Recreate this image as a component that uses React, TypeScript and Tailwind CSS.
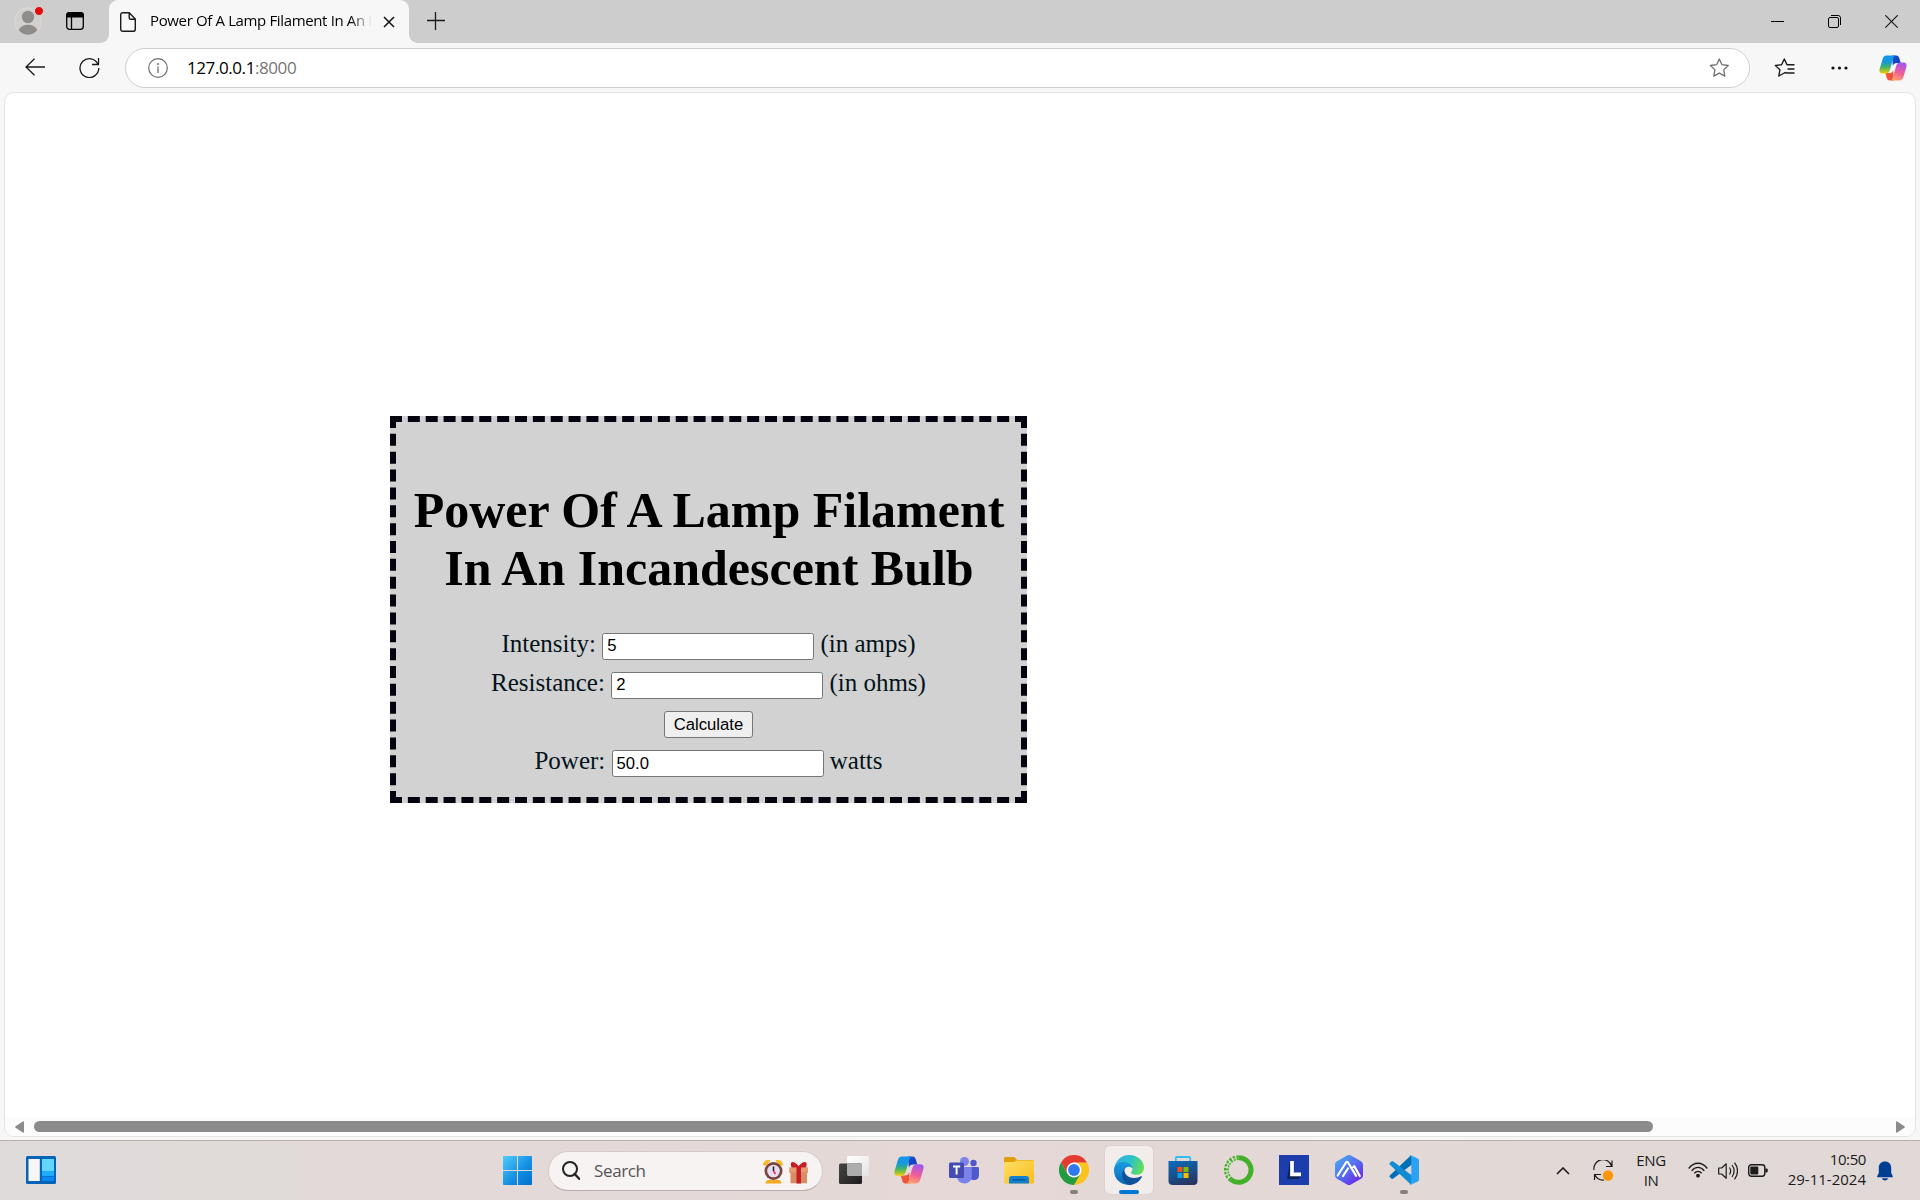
import type { ReactNode } from 'react';

type IconProps = { className?: string; box: string; children: ReactNode };

function Icon({ className = '', box, children }: IconProps) {
  return (
    <svg viewBox={box} fill="none" className={`block shrink-0 ${className}`}>
      {children}
    </svg>
  );
}

function CopilotIcon({ className, id }: { className: string; id: string }) {
  return (
    <Icon box="0 0 30 28" className={className}>
      <defs>
        <linearGradient id={`${id}a`} x1="0" y1="0" x2="0" y2="1">
          <stop offset="0" stopColor="#1593ee" />
          <stop offset=".38" stopColor="#1698d8" />
          <stop offset=".65" stopColor="#3fb566" />
          <stop offset="1" stopColor="#f2cf05" />
        </linearGradient>
        <linearGradient id={`${id}b`} x1=".6" y1="0" x2=".3" y2="1">
          <stop offset="0" stopColor="#a557f0" />
          <stop offset=".5" stopColor="#ee5b9a" />
          <stop offset="1" stopColor="#ffa56b" />
        </linearGradient>
        <linearGradient id={`${id}c`} x1="0" y1="0" x2="1" y2="1">
          <stop offset="0" stopColor="#1b4fd0" />
          <stop offset="1" stopColor="#0c3cc0" />
        </linearGradient>
        <linearGradient id={`${id}d`} x1="0" y1="0" x2="1" y2="1">
          <stop offset="0" stopColor="#f0612d" />
          <stop offset="1" stopColor="#ee4a3f" />
        </linearGradient>
      </defs>
      <path d="M14 .5h4.500c1.800 0 2.700 1 3.200 2.700l1.600 5.300h-4c-2.500 0-3.800 1-4.500 3.200z" fill={`url(#${id}c)`} />
      <path d="M16 27.500h-4.500c-1.800 0-2.700-1-3.200-2.700L6.700 19.500h4c2.500 0 3.800-1 4.500-3.200z" fill={`url(#${id}d)`} />
      <path d="M8 .5h10.500c-2 0-2.800 1.500-3.300 3.300l-3.500 12c-.8 2.700-2 4-4.700 4H3.500C1 19.800-.2 18 .6 15L3.800 4.200C4.500 1.800 5.700.5 8 .5z" fill={`url(#${id}a)`} />
      <path d="M22 27.500H11.500c2 0 2.800-1.500 3.300-3.300l3.500-12c.8-2.700 2-4 4.700-4h3.500c2.500 0 3.700 1.800 2.900 4.800l-3.200 10.800c-.7 2.400-1.900 3.700-4.200 3.700z" fill={`url(#${id}b)`} />
    </Icon>
  );
}

function TabStrip() {
  return (
    <div className="flex h-[43px] shrink-0 items-start bg-[#cdcdcd]">
      <Icon box="0 0 32 32" className="ml-[14px] mt-[5px] h-8 w-8">
        <circle cx="14" cy="16.300" r="13.500" fill="#d2d0ce" stroke="#dedcda" />
        <circle cx="14" cy="12" r="6.200" fill="#8f8c89" />
        <path d="M4.500 25c2-3.500 5.500-5.200 9.500-5.200s7.500 1.700 9.500 5.200c-2.300 3-5.700 4.700-9.500 4.700S6.800 28 4.500 25z" fill="#8f8c89" />
        <circle cx="25" cy="6" r="4.500" fill="#e5080c" stroke="#d8d8d8" />
      </Icon>
      <Icon box="0 0 18 18" className="ml-5 mt-3 h-[18px] w-[18px]">
        <rect x=".7" y=".7" width="16.600" height="16.600" rx="2.800" stroke="#000" strokeWidth="1.300" />
        <path d="M0 5.500V3.500C0 1.500 1.500 0 3.500 0h11c2 0 3.500 1.500 3.500 3.500v2z" fill="#000" />
        <path d="M5.500 5v12.500" stroke="#000" strokeWidth="1.300" />
      </Icon>
      <Icon box="0 0 9 9" className="ml-4 mt-[34px] h-[9px] w-[9px]">
        <path d="M9 0v9H0c5 0 9-4 9-9z" fill="#f7f7f7" />
      </Icon>
      <div className="flex h-[43px] w-[300px] items-center rounded-t-[9px] bg-[#f7f7f7] pl-[11px]">
        <Icon box="0 0 16 20" className="h-5 w-4">
          <path d="M2.800.7h6.400L15.300 7v10.200c0 1.200-.9 2.100-2.100 2.100H2.800c-1.200 0-2.100-.9-2.100-2.100V2.800C.7 1.600 1.600.7 2.800.7zM9.200 1v4.700c0 .9.600 1.500 1.500 1.500h4.500" stroke="#1a1a1a" strokeWidth="1.400" />
        </Icon>
        <div className="mb-[3px] ml-[14px] w-[222px] overflow-hidden whitespace-nowrap bg-gradient-to-r from-black from-90% to-transparent bg-clip-text font-['Open_Sans'] text-[15px] leading-5 tracking-[-0.36px] text-transparent">
          Power Of A Lamp Filament In An I
        </div>
        <Icon box="0 0 12 12" className="ml-[11px] h-3 w-3">
          <path d="M1 1l10 10M11 1L1 11" stroke="#111" strokeWidth="1.500" />
        </Icon>
      </div>
      <Icon box="0 0 9 9" className="mt-[34px] h-[9px] w-[9px]">
        <path d="M0 0v9h9C4 9 0 5 0 0z" fill="#f7f7f7" />
      </Icon>
      <Icon box="0 0 18 18" className="ml-[9px] mt-3 h-[18px] w-[18px]">
        <path d="M8.500 0v18M0 8.500h18" stroke="#1a1a1a" strokeWidth="1.300" />
      </Icon>
      <div className="ml-auto mr-[22px] mt-[15px] flex gap-11">
        <Icon box="0 0 13 14" className="h-[14px] w-[13px]">
          <path d="M0 6.500h13" stroke="#000" />
        </Icon>
        <Icon box="0 0 13 14" className="h-[14px] w-[13px]">
          <rect x=".5" y="2.500" width="10" height="10" rx="1.500" stroke="#000" />
          <path d="M3 .5h7c1.500 0 2.500 1 2.500 2.500v7" stroke="#000" />
        </Icon>
        <Icon box="0 0 13 14" className="h-[14px] w-[13px]">
          <path d="M.300 .300l12.400 12.400M12.700.3L.3 12.700" stroke="#111" strokeWidth="1.150" />
        </Icon>
      </div>
    </div>
  );
}

const STAR = 'M10.300 1l2.700 5.700 6.200.8-4.500 4.400 1.100 6.200-5.500-3-5.500 3 1.100-6.200L1.400 7.500l6.200-.8z';

function Toolbar() {
  return (
    <div className="flex h-[49px] shrink-0 items-center">
      <Icon box="0 0 20 18" className="mb-px ml-[25px] h-[18px] w-5">
        <path d="M20 9H1M9.500.7L1 9l8.500 8.300" stroke="#1a1a1a" strokeWidth="1.300" />
      </Icon>
      <Icon box="0 0 21 21" className="mb-px ml-[34px] h-[21px] w-[21px]">
        <path d="M19 7.300A9.400 9.400 0 1 0 19.800 11M19.500 1v6.500H13" stroke="#1a1a1a" strokeWidth="1.300" />
      </Icon>
      <div className="ml-[25px] flex h-10 w-[1625px] items-center rounded-full border border-[#cfcfcf] bg-white pl-[22px] pr-[19px]">
        <Icon box="0 0 20 20" className="h-5 w-5">
          <circle cx="10" cy="10" r="9.300" stroke="#6e6e6e" strokeWidth="1.200" />
          <path d="M10 8.500V15" stroke="#6e6e6e" strokeWidth="1.300" />
          <circle cx="10" cy="6" r="1" fill="#6e6e6e" />
        </Icon>
        <div className="ml-[19px] font-['Open_Sans'] text-[17px] leading-6 tracking-[-0.42px] text-black">
          127.0.0.1<span className="text-[#767676]">:8000</span>
        </div>
        <Icon box="0 0 21 20" className="ml-auto h-5 w-[21px]">
          <path d={STAR} stroke="#707070" strokeWidth="1.300" strokeLinejoin="round" />
        </Icon>
      </div>
      <Icon box="0 0 21 20" className="ml-6 h-5 w-[21px]">
        <path d="M12.500 14.500l-2.200.5-5.500 3 1.100-6.200L1.400 7.500l6.200-.8L10.300 1l2.700 5.700H20.500M13.500 11h7M12.500 15h8" stroke="#1a1a1a" strokeWidth="1.400" strokeLinejoin="round" />
      </Icon>
      <Icon box="0 0 18 4" className="ml-9 h-1 w-[18px]">
        <circle cx="2" cy="2" r="1.600" fill="#111" />
        <circle cx="8.500" cy="2" r="1.600" fill="#111" />
        <circle cx="15" cy="2" r="1.600" fill="#111" />
      </Icon>
      <CopilotIcon id="top" className="ml-[30px] h-[26px] w-7" />
    </div>
  );
}

function Field({ label, value, unit, inputClass = '' }: { label: string; value: string; unit: string; inputClass?: string }) {
  return (
    <div className="flex h-[39px] justify-center gap-[6.25px]">
      <span className="leading-[33px]">{label}</span>
      <input
        readOnly
        value={value}
        className={`mt-[6px] h-[27px] w-[212px] rounded-[2.5px] border border-[#767676] bg-white px-[4px] font-['Liberation_Sans'] text-[16.667px] text-black ${inputClass}`}
      />
      <span className="leading-[33px]">{unit}</span>
    </div>
  );
}

function PowerForm() {
  return (
    <div className="h-[387px] w-[637px] border-[6px] border-dashed border-[#05030f] bg-[#d2d2d2] pt-[59px] font-['Liberation_Serif'] text-[25px] text-[#04121a]">
      <h1 className="mb-[30px] pl-px text-center text-[50px] font-bold leading-[58px] text-black">
        Power Of A Lamp Filament
        <br />
        In An Incandescent Bulb
      </h1>
      <Field label="Intensity:" value="5" unit="(in amps)" inputClass="pb-[2px]" />
      <Field label="Resistance:" value="2" unit="(in ohms)" inputClass="pb-[2px]" />
      <div className="flex h-[39px] justify-center">
        <button className="mt-[6px] h-[27px] w-[89px] rounded-[3px] border border-[#767676] bg-[#efefef] font-['Liberation_Sans'] text-[16.667px] leading-[24px] text-black">
          Calculate
        </button>
      </div>
      <Field label="Power:" value="50.0" unit="watts" />
    </div>
  );
}

function Page() {
  return (
    <div className="ml-1 mr-1 flex h-[1045px] shrink-0 flex-col overflow-hidden rounded-[10px] border border-[#e4e4e4] bg-white">
      <div className="flex-1 pl-[385px] pt-[323px]">
        <PowerForm />
      </div>
      <div className="flex h-[19px] items-center bg-[#fcfcfc] pl-[10px] pr-[10px]">
        <Icon box="0 0 9 12" className="h-3 w-[9px]">
          <path d="M9 1v10c0 .8-.6 1-1.200.6L.6 6.700a.8.8 0 0 1 0-1.400L7.800.4C8.400 0 9 .2 9 1z" fill="#8b8b8b" />
        </Icon>
        <div className="ml-[10px] h-[11px] w-[1619px] rounded-full bg-[#8b8b8b]" />
        <Icon box="0 0 9 12" className="ml-auto h-3 w-[9px]">
          <path d="M0 1v10c0 .8.600 1 1.200.6l7.200-4.900a.8.800 0 0 0 0-1.400L1.200.4C.6 0 0 .2 0 1z" fill="#8b8b8b" />
        </Icon>
      </div>
    </div>
  );
}

function TaskApp({ children, active = false, running = false }: { children: ReactNode; active?: boolean; running?: boolean }) {
  return (
    <div className="flex w-[55px] shrink-0 justify-center">
      <div className={`flex h-12 w-12 flex-col items-center rounded-[5px] pt-[9px] ${active ? 'bg-[#f2edeb] shadow-[0_0_1px_#b9aeac]' : ''}`}>
        {children}
        {active && <div className="mt-[5px] h-1 w-5 rounded-full bg-[#0078d4]" />}
        {running && <div className="mt-[5px] h-1 w-2 rounded-full bg-[#857f7e]" />}
      </div>
    </div>
  );
}

function TaskApps() {
  return (
    <>
      <TaskApp>
        <Icon box="0 0 30 30" className="h-[30px] w-[30px]">
          <defs>
            <linearGradient id="tv1" x1="0" y1="0" x2="1" y2="1"><stop stopColor="#454545" /><stop offset="1" stopColor="#1d1d1d" /></linearGradient>
            <linearGradient id="tv2" x1="0" y1="0" x2="1" y2="1"><stop stopColor="#ffffff" /><stop offset="1" stopColor="#e4e4e4" /></linearGradient>
          </defs>
          <rect x="8" y="1" width="22" height="20" rx="1.500" fill="url(#tv2)" />
          <rect x="0" y="8.500" width="23" height="20.500" rx="1.500" fill="url(#tv1)" />
          <path d="M8 8.500h15V21H9.500C8.600 21 8 20.400 8 19.500z" fill="#adadad" />
        </Icon>
      </TaskApp>
      <TaskApp><CopilotIcon id="task" className="mt-px h-[28px] w-[30px]" /></TaskApp>
      <TaskApp>
        <Icon box="0 0 30 30" className="h-[30px] w-[30px]">
          <circle cx="15.500" cy="6.500" r="4.500" fill="#7b83eb" />
          <circle cx="24.500" cy="8" r="3.200" fill="#5059c9" />
          <path d="M19 12h9.500c.8 0 1.500.7 1.500 1.500V20c0 3-2 5-4.800 5-3.500 0-6.200-2-6.200-5z" fill="#5059c9" />
          <path d="M9 12h12.500c.8 0 1.300.6 1.300 1.400V21c0 4.500-3 7.500-7.300 7.500S8 25.500 8 21z" fill="#7b83eb" />
          <rect x="0" y="7.500" width="15" height="15.500" rx="1.500" fill="#444bb3" />
          <path d="M4 11.500h7.200M7.600 11.500v8" stroke="#fff" strokeWidth="1.900" />
        </Icon>
      </TaskApp>
      <TaskApp>
        <Icon box="0 0 30 30" className="h-[30px] w-[30px]">
          <defs>
            <linearGradient id="fo1" x1="0" y1="0" x2="1" y2="1"><stop stopColor="#ffde6a" /><stop offset="1" stopColor="#f8bd18" /></linearGradient>
          </defs>
          <path d="M0 3.500C0 2.600.7 2 1.500 2h8c.8 0 1.300.3 1.800.9L13 5h15.500c.8 0 1.500.7 1.500 1.500V10H0z" fill="#dfa007" />
          <path d="M0 8.500c0-1 .5-1.500 1.500-1.500h8.200c.8 0 1.300-.3 1.800-.9l.5-.6H30V27c0 .9-.6 1.500-1.500 1.500h-27C.6 28.500 0 27.900 0 27z" fill="url(#fo1)" />
          <path d="M5 28.500V24c0-2 1-3 3-3h14c2 0 3 1 3 3v4.500z" fill="#1180d0" />
          <path d="M9 24.800h12" stroke="#084e8c" strokeWidth="1.300" strokeLinecap="round" />
        </Icon>
      </TaskApp>
      <TaskApp running>
        <Icon box="0 0 30 30" className="h-[30px] w-[30px]">
          <path d="M28 7.500A15 15 0 0 1 15 30l6.500-11.200L15 7.500z" fill="#fcc31e" />
          <path d="M15 7.500h13A15 15 0 0 0 2 7.500l6.500 11.300z" fill="#e33b2e" />
          <path d="M2 7.500A15 15 0 0 0 15 30l6.500-11.200L8.500 18.800z" fill="#249a41" />
          <circle cx="15" cy="15" r="7.500" fill="#fff" />
          <circle cx="15" cy="15" r="5.900" fill="#3079ec" />
        </Icon>
      </TaskApp>
      <TaskApp active>
        <Icon box="0 0 30 30" className="h-[30px] w-[30px]">
          <defs>
            <linearGradient id="ed1" x1="0" y1=".3" x2="1" y2=".6"><stop stopColor="#2eb0e6" /><stop offset=".5" stopColor="#2bc3c8" /><stop offset="1" stopColor="#65df52" /></linearGradient>
            <linearGradient id="ed2" x1=".5" y1="0" x2=".5" y2="1"><stop stopColor="#1a9be0" /><stop offset="1" stopColor="#0a67b8" /></linearGradient>
          </defs>
          <path d="M.5 13.500C1.300 5.500 7.300 0 15 0c8.500 0 15 5.700 15 12.500 0 4.500-3 7.300-7.300 7.300-3.500 0-5.700-1-5.700-2.400 0-.8 1.500-1.200 1.500-3.400 0-2.500-2.500-4.500-6-4.500-5 0-9 1.500-12 4z" fill="url(#ed1)" />
          <path d="M0 15c0-4.500 4-8 9-8 5.500 0 9.500 3 9.500 6.800-1-1.400-2.200-2-3.700-2-3.300 0-5.300 3-5.300 6.700 0 5.500 4 9.500 9 11C8.500 31.500 0 25.500 0 15z" fill="url(#ed2)" />
          <path d="M10.500 13.500c-.8 5.500 3.500 9.500 9.500 9.500 3 0 5-.8 7-1.700.8-.3 1.300.3.800 1C25.500 26.500 21 30 15.500 30 9 28.500 5.500 19.500 10.500 13.500z" fill="#10529a" />
        </Icon>
      </TaskApp>
      <TaskApp>
        <Icon box="0 0 30 30" className="mr-px h-[30px] w-[30px]">
          <defs>
            <linearGradient id="st1" x1=".3" y1="0" x2=".7" y2="1"><stop stopColor="#0d69b5" /><stop offset="1" stopColor="#27345e" /></linearGradient>
          </defs>
          <path d="M7.800 7V3.200c0-.8.500-1.200 1.200-1.200h12c.7 0 1.200.4 1.200 1.200V7" stroke="#32bdf0" strokeWidth="1.800" />
          <path d="M.5 6h29v20c0 2.500-1.500 4-4 4h-21c-2.500 0-4-1.500-4-4z" fill="url(#st1)" />
          <path d="M9.500 12h5v5h-5z" fill="#f25022" /><path d="M15.500 12h5v5h-5z" fill="#7fba00" />
          <path d="M9.500 18h5v5h-5z" fill="#00a4ef" /><path d="M15.500 18h5v5h-5z" fill="#ffb900" />
        </Icon>
      </TaskApp>
      <TaskApp>
        <Icon box="0 0 30 30" className="h-[30px] w-[30px]">
          <path d="M15 2.700A12.300 12.300 0 1 1 7 24.600" stroke="#43b02a" strokeWidth="5" />
          <path d="M7 24.600A12.300 12.300 0 0 1 15 2.700" stroke="#43b02a" strokeWidth="4.800" strokeDasharray="2.200 1.300" />
          <path d="M5.500 22.800A12.300 12.300 0 0 1 12.500 3" stroke="#d9e6d1" strokeWidth="1.300" strokeDasharray="3 2" />
        </Icon>
      </TaskApp>
      <TaskApp>
        <Icon box="0 0 30 30" className="h-[30px] w-[30px]">
          <path d="M0 0h30v30H0z" fill="#1c3ead" />
          <path d="M11 6L8 24h12l2-3-9-2z" fill="#0d2457" />
          <path d="M13 6v13.300h9" stroke="#fff" strokeWidth="3.700" />
        </Icon>
      </TaskApp>
      <TaskApp>
        <Icon box="0 0 30 30" className="h-[30px] w-[30px]">
          <defs>
            <linearGradient id="aw1" x1=".1" y1=".1" x2=".8" y2=".9"><stop stopColor="#4aa5ee" /><stop offset=".5" stopColor="#5570ee" /><stop offset="1" stopColor="#6a2bec" /></linearGradient>
          </defs>
          <path d="M13 .6c1.300-.8 2.700-.8 4 0l10 5.600c1.300.8 2 2 2 3.500v10.600c0 1.500-.7 2.700-2 3.500l-10 5.600c-1.300.8-2.700.8-4 0L3 23.800c-1.300-.8-2-2-2-3.500V9.700c0-1.500.7-2.700 2-3.500z" fill="url(#aw1)" />
          <path d="M3.700 20.500L12 7.500c.5-.8 1.500-.8 2 0l8.200 13.300M9 21l5-7.500M19.300 12l1-.8 5.500 9.800" stroke="#fff" strokeWidth="2.200" strokeLinecap="round" strokeLinejoin="round" />
        </Icon>
      </TaskApp>
      <TaskApp running>
        <Icon box="0 0 30 30" className="h-[30px] w-[30px]">
          <path d="M1 20.300L22 .3l2 8.500L4.300 23.500c-.7.500-1.500.5-2 0L.8 22c-.6-.6-.5-1.200.2-1.700z" fill="#0070b7" />
          <path d="M1 9.700l21 20 2-8.500L4.300 6.500c-.7-.5-1.500-.5-2 0L.8 8c-.6.600-.5 1.200.2 1.700z" fill="#108bd4" />
          <path d="M21.800.300l6.900 3.200c.8.400 1.300 1 1.300 2v19c0 1-.5 1.600-1.300 2l-6.900 3.200c-.9.400-1.300 0-1.800-.5 1.300.8 2.300 0 2.300-1.200V2c0-1.200-1-2-2.300-1.200.5-.6.900-.9 1.800-.5z" fill="#2ba2f3" />
        </Icon>
      </TaskApp>
    </>
  );
}

function SearchBox() {
  return (
    <div className="ml-4 mt-[4.500px] flex h-10 w-[275px] shrink-0 items-center rounded-full border border-[#d5cac8] border-b-[#b9afae] bg-[#f6f3f2] pl-[13px] pr-[14px] mt-1">
      <Icon box="0 0 18 19" className="h-[19px] w-[18px]">
        <circle cx="8" cy="8" r="7" stroke="#222" strokeWidth="2" />
        <path d="M12.700 13l4.500 4.800" stroke="#222" strokeWidth="2.400" strokeLinecap="round" />
      </Icon>
      <span className="ml-[14px] mt-px font-['Open_Sans'] text-[17px] leading-6 tracking-[-0.36px] text-[#555]">Search</span>
      <Icon box="0 0 45 25" className="ml-auto mt-px h-[25px] w-[45px]">
        <path d="M.5 6C.5 3 3 .8 7 1.500L3 6.300zM19.500 6c0-3-2.500-5.200-6.500-4.500L17 6.300z" fill="#f9b928" stroke="#f9b928" strokeLinejoin="round" />
        <path d="M4.500 21h12l2 2.200c.3.900-.3 1.300-1 1.300h-14c-.8 0-1.300-.5-1-1.300z" fill="#f5a921" />
        <circle cx="10.500" cy="12" r="9" fill="#7b453e" />
        <circle cx="10.500" cy="12" r="6.300" fill="#e5ddf0" />
        <path d="M10.500 7.500V12" stroke="#26202c" strokeWidth="1.500" />
        <path d="M10.500 12l2 3" stroke="#f0284a" strokeWidth="1.500" />
        <path d="M26.500 8.500h18.500v5.500h-1v10.300H27.500V14h-1z" fill="#d98b62" />
        <path d="M26.500 8.500h18.500v5h-18.500z" fill="#e49b70" />
        <path d="M33.500 7.500h4.500v17h-4.500zM28 4c1-2 4-1 7.700 3C39 3 42.500 2 43.500 4c.5 1.500 0 4-1 4.500h-13.500C28 8 27.500 5.500 28 4z" fill="#c51d24" />
      </Icon>
    </div>
  );
}

function SystemTray() {
  return (
    <div className="ml-auto mr-[27px] flex h-[50px] items-center font-['Open_Sans'] text-[15px] leading-5 text-[#1b1b1b]">
      <Icon box="0 0 14 8" className="h-2 w-[14px]">
        <path d="M1 7l6-6 6 6" stroke="#1b1b1b" strokeWidth="1.600" />
      </Icon>
      <Icon box="0 0 21 21" className="mb-[2px] ml-[23px] h-[21px] w-[21px]">
        <path d="M1 10a9 9 0 0 1 17.500-4M19 .5v6h-6M1.500 20v-5.500H8M2 15a9 9 0 0 0 9 5" stroke="#1b1b1b" strokeWidth="1.200" />
        <circle cx="15" cy="15.500" r="5.200" fill="#fb960b" />
      </Icon>
      <div className="mb-[3px] ml-[19px] w-[36px] text-center tracking-[-0.4px]">ENG<br />IN</div>
      <Icon box="0 0 20 16" className="mb-[2px] ml-[19px] h-4 w-5">
        <path d="M.7 6.500C6-.5 14-.5 19.300 6.500M3.700 8.800c3.600-4.500 9-4.500 12.600 0M6.300 11.300c2.200-2.500 5.200-2.500 7.400 0" stroke="#1b1b1b" strokeWidth="1.300" />
        <circle cx="10" cy="13.700" r="1.900" fill="#1b1b1b" />
      </Icon>
      <Icon box="0 0 20 18" className="mb-px ml-[10px] h-[18px] w-5">
        <path d="M.7 6h3l4.500-4.200v14.400L3.700 12h-3zM11.500 5.500c1.300 2 1.300 5 0 7M14 3c2.800 3.500 2.800 8.500 0 12M16.500.7c4 5 4 11.600 0 16.600" stroke="#1b1b1b" strokeWidth="1.200" strokeLinejoin="round" />
      </Icon>
      <Icon box="0 0 20 13" className="mb-px ml-[10px] h-[13px] w-5">
        <rect x=".7" y=".7" width="16.100" height="11.600" rx="2.700" stroke="#1b1b1b" strokeWidth="1.400" />
        <rect x="2.300" y="2.500" width="8" height="8" rx="1" fill="#1b1b1b" />
        <path d="M17.300 4.500h1.200c.8 0 1.300.6 1.300 2s-.5 2-1.300 2h-1.200z" fill="#1b1b1b" />
      </Icon>
      <div className="mb-[4px] w-[98px] whitespace-nowrap text-right"><span className="tracking-[-0.4px]">10:50</span><br />29-11-2024</div>
      <Icon box="0 0 16 20" className="mb-px ml-[11px] h-5 w-4">
        <path d="M8 .5c3.700 0 6.200 2.500 6.200 6.200v5l1.600 3.500c.2.600 0 1-.6 1H.8c-.6 0-.8-.4-.6-1l1.600-3.500v-5C1.800 3 4.300.5 8 .5zM5 17.300h6c-.3 1.400-1.500 2.200-3 2.200s-2.700-.8-3-2.200z" fill="#003e92" />
      </Icon>
    </div>
  );
}

function Taskbar() {
  return (
    <div className="mt-auto flex h-[60px] items-start overflow-hidden border-t border-[#b5afae] bg-gradient-to-r from-[#dfdbda] via-[#e5d8d6] to-[#e0d9d7] pt-[5px]">
      <Icon box="0 0 30 28" className="ml-[26px] mt-[10px] h-7 w-[30px]">
        <rect width="30" height="28" rx="1.500" fill="#0763b7" />
        <path d="M2.500 3h11.300v22H2.500z" fill="#f7f6f5" />
        <path d="M16 3h12v12H16z" fill="#63d6ff" />
        <path d="M16 15h12v5H16z" fill="#1dacfa" />
        <path d="M16 20.500h12V25H16z" fill="#0889ee" />
      </Icon>
      <Icon box="0 0 29 29" className="ml-[447px] mt-[10px] h-[29px] w-[29px]">
        <defs>
          <linearGradient id="win" x1="0" y1="0" x2="1" y2="1"><stop stopColor="#51ccfb" /><stop offset=".6" stopColor="#118ce0" /><stop offset="1" stopColor="#0070cc" /></linearGradient>
        </defs>
        <path d="M1 0h13v14H0V1c0-.6.400-1 1-1zM15 0h13c.6 0 1 .4 1 1v13H15zM0 15h14v14H1c-.6 0-1-.4-1-1zM15 15h14v13c0 .6-.4 1-1 1H15z" fill="url(#win)" />
      </Icon>
      <SearchBox />
      <div className="ml-[3px] flex">
        <TaskApps />
      </div>
      <SystemTray />
    </div>
  );
}

export default function App() {
  return (
    <div className="flex h-[1200px] w-[1920px] flex-col overflow-hidden bg-[#f7f7f7]">
      <TabStrip />
      <Toolbar />
      <Page />
      <Taskbar />
    </div>
  );
}
